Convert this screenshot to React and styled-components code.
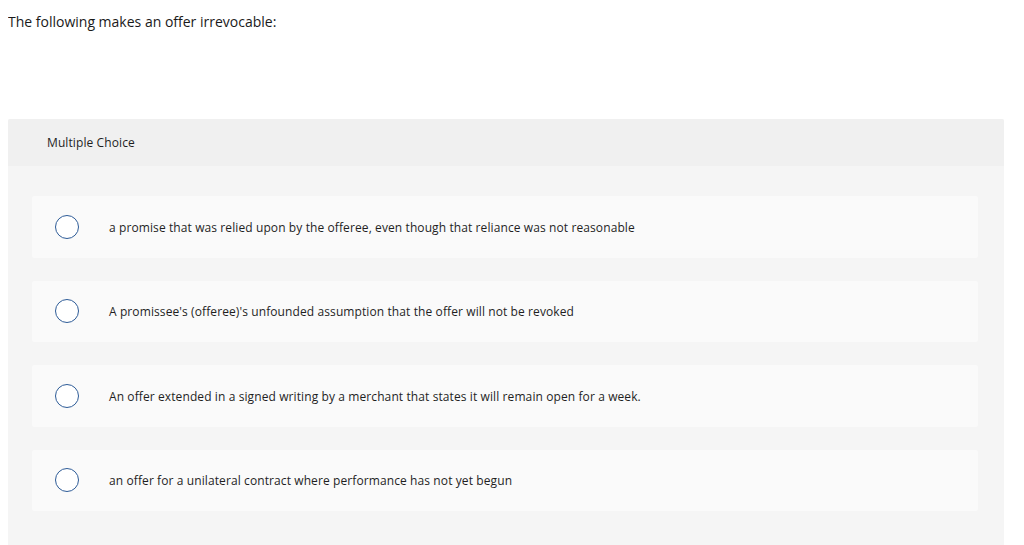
import React from "react";
import styled, { createGlobalStyle } from "styled-components";

const Global = createGlobalStyle`
  body {
    margin: 8px;
    background: #ffffff;
    font-family: "Open Sans", Lato, Arial, sans-serif;
    color: #1f1f1f;
  }
`;

const Prompt = styled.p`
  margin: 0;
  padding-top: 4px;
  font-size: 14px;
  line-height: 19px;
  color: #1a1a1a;
  height: 107px;
`;

const Panel = styled.section`
  width: 996px;
  background: #f5f5f5;
  border-radius: 2px 2px 0 0;
  padding-bottom: 40px;
`;

const Header = styled.div`
  height: 47px;
  display: flex;
  align-items: center;
  padding-left: 39px;
  background: #f0f0f0;
  font-size: 12px;
  letter-spacing: 0.1px;
  color: #1f1f1f;
  border-radius: 2px 2px 0 0;
`;

const List = styled.div`
  display: flex;
  flex-direction: column;
  gap: 23px;
  padding: 30px 26px 0 24px;
`;

const Option = styled.label`
  height: 61.5px;
  display: flex;
  align-items: center;
  background: #fafafa;
  border-radius: 2px;
  padding-left: 23px;
  cursor: pointer;
`;

const Radio = styled.span`
  width: 24px;
  height: 24px;
  box-sizing: border-box;
  border: 1.2px solid #2d5b97;
  border-radius: 50%;
  background: #ffffff;
  flex: none;
`;

const OptionText = styled.span`
  margin-left: 30px;
  padding-top: 1px;
  font-size: 12px;
  letter-spacing: 0.1px;
  color: #1f1f1f;
`;

const options = [
  "a promise that was relied upon by the offeree, even though that reliance was not reasonable",
  "A promissee's (offeree)'s unfounded assumption that the offer will not be revoked",
  "An offer extended in a signed writing by a merchant that states it will remain open for a week.",
  "an offer for a unilateral contract where performance has not yet begun",
];

export default function App() {
  return (
    <>
      <Global />
      <Prompt>The following makes an offer irrevocable:</Prompt>
      <Panel>
        <Header>Multiple Choice</Header>
        <List>
          {options.map((o) => (
            <Option key={o}>
              <Radio />
              <OptionText>{o}</OptionText>
            </Option>
          ))}
        </List>
      </Panel>
    </>
  );
}
